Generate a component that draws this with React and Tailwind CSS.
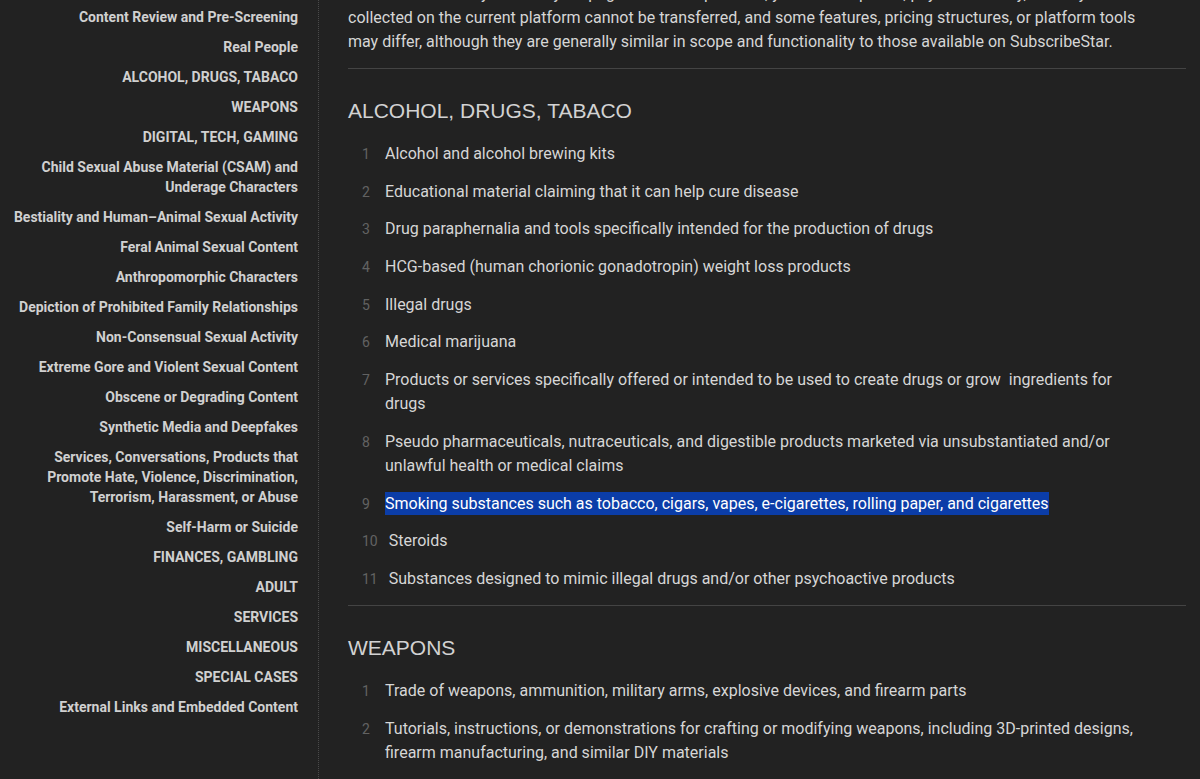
import React from 'react';

const navItems = [
  'Content Review and Pre-Screening',
  'Real People',
  'ALCOHOL, DRUGS, TABACO',
  'WEAPONS',
  'DIGITAL, TECH, GAMING',
  'Child Sexual Abuse Material (CSAM) and Underage Characters',
  'Bestiality and Human\u2013Animal Sexual Activity',
  'Feral Animal Sexual Content',
  'Anthropomorphic Characters',
  'Depiction of Prohibited Family Relationships',
  'Non-Consensual Sexual Activity',
  'Extreme Gore and Violent Sexual Content',
  'Obscene or Degrading Content',
  'Synthetic Media and Deepfakes',
  'Services, Conversations, Products that Promote Hate, Violence, Discrimination, Terrorism, Harassment, or Abuse',
  'Self-Harm or Suicide',
  'FINANCES, GAMBLING',
  'ADULT',
  'SERVICES',
  'MISCELLANEOUS',
  'SPECIAL CASES',
  'External Links and Embedded Content',
];

const sections = [
  {
    title: 'ALCOHOL, DRUGS, TABACO',
    items: [
      'Alcohol and alcohol brewing kits',
      'Educational material claiming that it can help cure disease',
      'Drug paraphernalia and tools specifically intended for the production of drugs',
      'HCG-based (human chorionic gonadotropin) weight loss products',
      'Illegal drugs',
      'Medical marijuana',
      'Products or services specifically offered or intended to be used to create drugs or grow\u00a0 ingredients for drugs',
      'Pseudo pharmaceuticals, nutraceuticals, and digestible products marketed via unsubstantiated and/or unlawful health or medical claims',
      'Smoking substances such as tobacco, cigars, vapes, e-cigarettes, rolling paper, and cigarettes',
      'Steroids',
      'Substances designed to mimic illegal drugs and/or other psychoactive products',
    ],
    selected: 8,
  },
  {
    title: 'WEAPONS',
    items: [
      'Trade of weapons, ammunition, military arms, explosive devices, and firearm parts',
      'Tutorials, instructions, or demonstrations for crafting or modifying weapons, including 3D-printed designs, firearm manufacturing, and similar DIY materials',
    ],
  },
];

const Section = ({ title, items, selected }) => (
  <div>
    <h2 className="mt-[27px] text-[21px] leading-[30px] text-[#d2d2d2] font-['Liberation_Sans',Arial,sans-serif]">
      {title}
    </h2>
    <ol className="mt-[16px] flex flex-col gap-[13.7px] pr-[36px]">
      {items.map((item, index) => (
        <li key={index} className="flex items-baseline pl-[14px]">
          <span className="min-w-[23px] pr-[11px] text-[14px] text-[#626262] shrink-0">{index + 1}</span>
          <span className="text-[16px] leading-[24px] text-[#d6d6d6]">
            {index === selected ? (
              <span className="bg-[#0b3da8] text-white py-[2px]">{item}</span>
            ) : (
              item
            )}
          </span>
        </li>
      ))}
    </ol>
    <hr className="mt-[14px] border-0 border-t border-[#444444]" />
  </div>
);

export default function App() {
  return (
    <div className="h-[779px] w-[1200px] overflow-hidden bg-[#222222] font-['Roboto',sans-serif] flex">
      {/* Sidebar nav */}
      <aside className="w-[319px] shrink-0 border-r border-dotted border-[#4a4a4a] pt-[7px] pr-[20px]">
        <ul className="flex flex-col gap-[10px] text-right">
          {navItems.map((item) => (
            <li key={item} className="pl-[4px] text-[14px] leading-[20px] font-bold text-[#d0d0d0]">
              {item}
            </li>
          ))}
        </ul>
      </aside>

      {/* Main content */}
      <main className="flex-1 pl-[29px] pr-[14px] -mt-[18px]">
        <p className="pr-[36px] text-[16px] leading-[24px] text-[#d6d6d6]">
          Please note that if you move your page to another platform, your subscriptions, payment history, and any data
          <br />
          collected on the current platform cannot be transferred, and some features, pricing structures, or platform tools
          <br />
          may differ, although they are generally similar in scope and functionality to those available on SubscribeStar.
        </p>
        <hr className="mt-[14px] border-0 border-t border-[#444444]" />
        {sections.map((section) => (
          <Section key={section.title} {...section} />
        ))}
      </main>
    </div>
  );
}
